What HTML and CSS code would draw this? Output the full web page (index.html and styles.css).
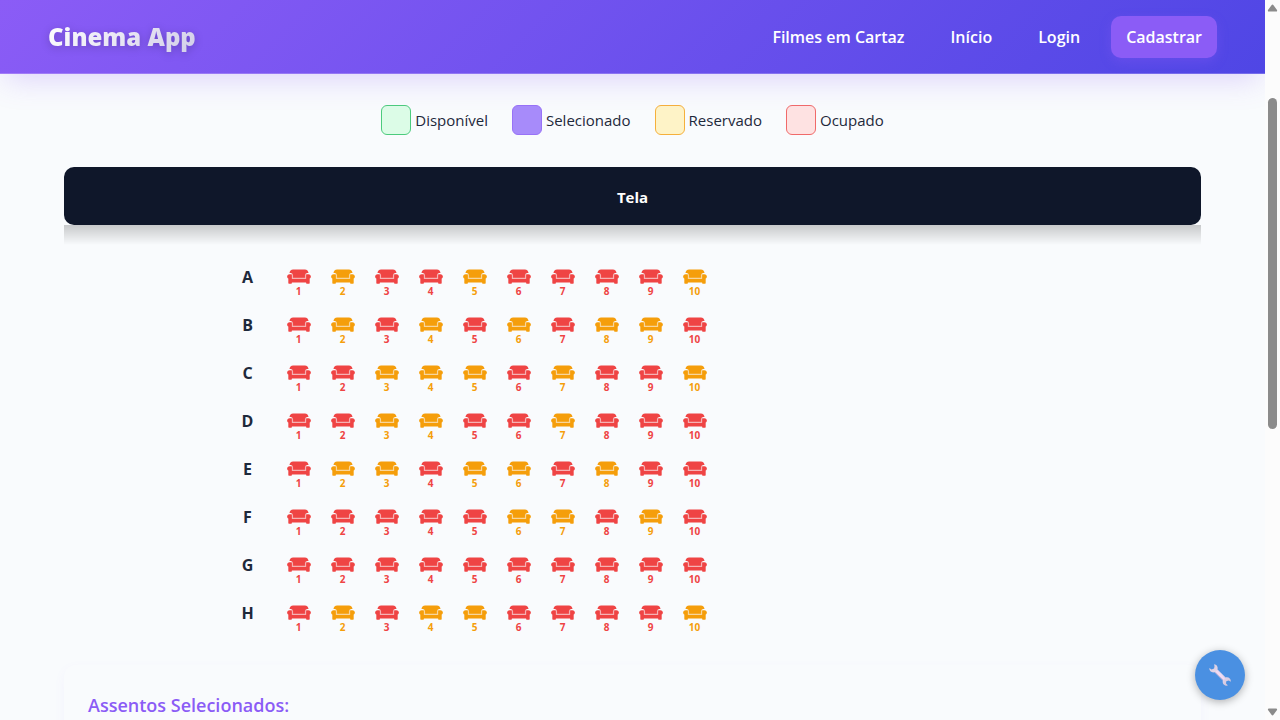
FILE: index.html
```html
<!DOCTYPE html>
<html lang="pt-BR">
<head>
<meta charset="utf-8">
<meta name="viewport" content="width=device-width, initial-scale=1">
<title>Cinema App</title>
<link rel="stylesheet" href="styles.css">
</head>
<body>
<svg class="sprite" aria-hidden="true">
  <symbol id="couch" viewBox="0 0 640 512"><path opacity=".4" d="M110 180h420v160H110z"/><path d="M160 224v64h320v-64c0-35.300 28.700-64 64-64h32c0-53-43-96-96-96H160c-53 0-96 43-96 96h32c35.300 0 64 28.700 64 64zm416-32h-32c-17.700 0-32 14.300-32 32v96H128v-96c0-17.700-14.300-32-32-32H64c-35.300 0-64 28.700-64 64 0 23.600 13 44 32 55.100V432c0 8.800 7.200 16 16 16h64c8.800 0 16-7.200 16-16v-16h384v16c0 8.800 7.200 16 16 16h64c8.800 0 16-7.200 16-16V311.100c19-11.100 32-31.500 32-55.100 0-35.300-28.700-64-64-64z"/></symbol>
</svg>
<div class="shell">
  <div class="page">
    <header class="navbar">
      <a class="brand" href="#">Cinema App</a>
      <nav class="menu">
        <a class="menu-link" href="#">Filmes em Cartaz</a>
        <a class="menu-link" href="#">Início</a>
        <a class="menu-link" href="#">Login</a>
        <a class="menu-link menu-cta" href="#">Cadastrar</a>
      </nav>
    </header>
    <main class="content">
      <ul class="legend">
        <li class="legend-item"><span class="swatch available"></span>Disponível</li>
        <li class="legend-item"><span class="swatch selected"></span>Selecionado</li>
        <li class="legend-item"><span class="swatch reserved"></span>Reservado</li>
        <li class="legend-item"><span class="swatch occupied"></span>Ocupado</li>
      </ul>
      <div class="screen">Tela</div>
      <div class="screen-glow"></div>
      <div class="seat-map" id="seat-map"></div>
      <section class="summary">
        <h2 class="summary-title">Assentos Selecionados:</h2>
      </section>
    </main>
  </div>
  <div class="scrollbar" aria-hidden="true">
    <svg class="arrow" viewBox="0 0 11 8"><path d="M5.500 0.500Q6 0.500 6.500 1.200L10 6Q10.500 7.500 9 7.500H2Q.500 7.500 1 6L4.500 1.200Q5 .500 5.500 .500Z"/></svg>
    <div class="track"><div class="thumb"></div></div>
    <svg class="arrow down" viewBox="0 0 11 8"><path d="M5.500 0.500Q6 0.500 6.500 1.200L10 6Q10.500 7.500 9 7.500H2Q.500 7.500 1 6L4.500 1.200Q5 .500 5.500 .500Z"/></svg>
  </div>
</div>
<button class="tools" type="button" aria-label="Ferramentas">
  <svg viewBox="0 0 24 24">
    <defs><linearGradient id="metal" x1="0" y1="0" x2="1" y2="1"><stop offset="0" stop-color="#d2cbdc"/><stop offset=".5" stop-color="#eddcf2"/><stop offset="1" stop-color="#c9c0d8"/></linearGradient></defs>
    <path fill="url(#metal)" d="M6 1.200C8.800 1.400 10.200 3.800 9.500 6.400L17.600 14.500C20.500 13.700 23 15.600 22.900 18.700L20.600 17.500L18.300 18.300L18 20.400L20 22.600C16.700 23.400 14 20.900 14.800 17.500L6.600 9.300C3.700 10 1.100 8.200 1.300 5.100L3.600 6.500L6.100 5.600L6.500 3.200Z"/>
    <path d="M8.300 8.200L16.300 16.200" stroke="#f3d9f6" stroke-width="1.400"/>
    <path d="M7.200 9.300L14.900 17" stroke="#aaa0c4" stroke-width=".6"/>
  </svg>
</button>
<script src="script.js"></script>
</body>
</html>
```
FILE: styles.css
```css
* { box-sizing: border-box; }
body {
  margin: 0;
  background: #f9fbfd;
  color: #1e293b;
  font-family: "Open Sans", "Noto Sans", sans-serif;
  font-size: 15px;
  line-height: 24px;
}
a { color: inherit; text-decoration: none; }
.sprite { display: none; }
.shell { display: flex; height: 100vh; overflow: hidden; }
.page { flex: 1; min-width: 0; overflow: hidden; }
.navbar {
  position: relative;
  display: flex;
  align-items: center;
  justify-content: space-between;
  padding: 16px 48px 15px;
  border-bottom: 1px solid rgba(255, 255, 255, 0.2);
  background: linear-gradient(135deg, #8b5cf6, #4f46e5);
  box-shadow: 0 10px 30px -5px rgba(139, 92, 246, 0.25);
}
.brand {
  background: linear-gradient(135deg, #ffffff, #d1cde8);
  background-clip: text;
  -webkit-background-clip: text;
  color: transparent;
  font-size: 24px;
  font-weight: 800;
  line-height: 36px;
  filter: drop-shadow(0 2px 4px rgba(0, 0, 0, 0.2));
}
.menu { display: flex; align-items: center; gap: 16px; color: #ffffff; font-size: 16px; font-weight: 600; }
.menu-link { padding: 9px 15px; border-radius: 10px; }
.menu-cta { background: #8b5cf6; box-shadow: 0 4px 12px rgba(139, 92, 246, 0.3); }
.content { padding: 31px 64px; }
.legend {
  display: flex;
  justify-content: center;
  gap: 24px;
  margin: 0 0 32px;
  padding: 0;
  list-style: none;
}
.legend-item { display: flex; align-items: center; gap: 4px; }
.swatch { width: 30px; height: 30px; border: 1px solid; border-radius: 6px; }
.available { border-color: #4ccb7d; background: #dcfce7; }
.selected { border-color: #9872f7; background: #a78bfa; }
.reserved { border-color: #f5b03c; background: #fef3c7; }
.occupied { border-color: #f06a6a; background: #fee2e2; }
.screen {
  padding: 18px 16px 16px;
  border-radius: 10px;
  background: #0f172a;
  color: #ffffff;
  font-weight: 700;
  text-align: center;
}
.screen-glow { height: 20px; background: linear-gradient(rgba(0, 0, 0, 0.2), transparent); }
.seat-map {
  display: flex;
  flex-direction: column;
  gap: 8px;
  max-width: 800px;
  margin: 12px auto 32px;
}
.seat-row { display: flex; align-items: center; gap: 8px; height: 40px; }
.row-label { width: 30px; margin-right: 10px; font-size: 16px; font-weight: 700; text-align: center; }
.seat {
  display: flex;
  flex-direction: column;
  align-items: center;
  width: 36px;
  height: 40px;
  padding: 10px 0 0;
  border: 0;
  background: none;
  color: #ef4444;
  font: 700 10px/10px "Open Sans", "Noto Sans", sans-serif;
}
.seat.is-reserved { color: #f59e0b; }
.seat svg { flex: none; width: 24px; height: 19px; fill: currentColor; }
.summary {
  padding: 24px;
  border-radius: 12px;
  min-height: 160px;
  box-shadow: 0 4px 12px rgba(139, 92, 246, 0.05);
}
.summary-title { margin: 4px 0; color: #8b5cf6; font-size: 18px; font-weight: 600; line-height: 24px; }
.scrollbar {
  display: flex;
  flex-direction: column;
  align-items: center;
  width: 15px;
  padding: 4px 0;
  background: #fcfcfc;
}
.arrow { width: 11px; height: 8px; fill: #8b8b8b; }
.down { transform: rotate(180deg); }
.track { flex: 1; padding-top: 86px; }
.thumb { width: 9px; height: 54.3%; border-radius: 5px; background: #8b8b8b; }
.tools {
  position: fixed;
  right: 35px;
  bottom: 20px;
  display: grid;
  place-items: center;
  width: 50px;
  height: 50px;
  padding: 0;
  border: 0;
  border-radius: 50%;
  background: #4a90e2;
  box-shadow: 0 2px 8px rgba(0, 0, 0, 0.3);
}
.tools svg { width: 24px; height: 24px; fill: none; }
```
FILE: script.js
```js
// R = reserved, O = occupied
const rows = {
  A: "OROOROOOOR",
  B: "ORORORORRO",
  C: "OORRROROOR",
  D: "OORROOROOO",
  E: "ORRORROROO",
  F: "OOOOORRORO",
  G: "OOOOOOOOOO",
  H: "ORORROOOOR"
};

document.getElementById("seat-map").innerHTML = Object.entries(rows)
  .map(([name, seats]) => {
    const buttons = [...seats]
      .map((state, i) => `<button type="button" class="seat${state === "R" ? " is-reserved" : ""}" aria-label="Assento ${name}${i + 1}"><svg aria-hidden="true"><use href="#couch"/></svg><span>${i + 1}</span></button>`)
      .join("");
    return `<div class="seat-row"><span class="row-label">${name}</span>${buttons}</div>`;
  })
  .join("");
```
